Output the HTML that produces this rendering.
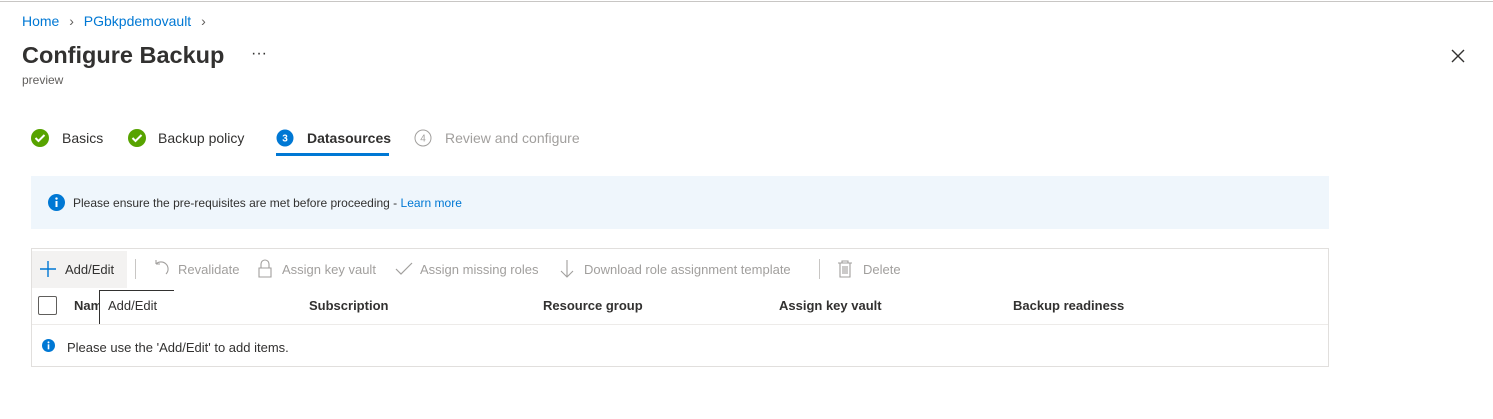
<!DOCTYPE html>
<html><head><meta charset="utf-8"><style>
*{margin:0;padding:0;box-sizing:border-box}
body{width:1493px;height:419px;background:#fff;font-family:"Liberation Sans",sans-serif;color:#323130;position:relative;overflow:hidden}
.a{position:absolute;white-space:nowrap}
.g{color:#a19f9d}
</style></head><body>
<div class="a" style="left:0;top:1px;width:1493px;height:1px;background:#c8c6c4"></div>
<div class="a" style="left:22px;top:13px;font-size:14px;color:#0078d4">Home <span style="color:#605e5c;margin:0 6px">&#x203A;</span> PGbkpdemovault <span style="color:#605e5c;margin-left:6px">&#x203A;</span></div>
<div class="a" style="left:22px;top:42px;font-size:23.5px;font-weight:600;color:#323130">Configure Backup</div>
<div class="a" style="left:251px;top:45px;font-size:16px">&middot;&middot;&middot;</div>
<div class="a" style="left:22px;top:73px;font-size:12px;color:#605e5c">preview</div>
<svg class="a" style="left:1450px;top:48px" width="16" height="16"><path d="M2 2L14 14M14 2L2 14" stroke="#323130" stroke-width="1.4"/></svg>

<svg class="a" style="left:30px;top:128px" width="20" height="20"><circle cx="10" cy="10" r="9" fill="#57a300"/><path d="M5.5 10l3 3 6-6" stroke="#fff" stroke-width="2" fill="none"/></svg>
<div class="a" style="left:62px;top:130px;font-size:14px">Basics</div>
<svg class="a" style="left:127px;top:128px" width="20" height="20"><circle cx="10" cy="10" r="9" fill="#57a300"/><path d="M5.5 10l3 3 6-6" stroke="#fff" stroke-width="2" fill="none"/></svg>
<div class="a" style="left:158px;top:130px;font-size:14px">Backup policy</div>
<svg class="a" style="left:276px;top:129px" width="18" height="18"><circle cx="9" cy="9" r="8.5" fill="#0078d4"/><text x="9" y="12.5" font-size="10" font-weight="bold" fill="#fff" text-anchor="middle" font-family="Liberation Sans">3</text></svg>
<div class="a" style="left:307px;top:130px;font-size:14px;font-weight:600">Datasources</div>
<div class="a" style="left:276px;top:153px;width:113px;height:3px;background:#0078d4"></div>
<svg class="a" style="left:414px;top:129px" width="18" height="18"><circle cx="9" cy="9" r="8" fill="none" stroke="#a19f9d"/><text x="9" y="12.5" font-size="10" fill="#a19f9d" text-anchor="middle" font-family="Liberation Sans">4</text></svg>
<div class="a g" style="left:445px;top:130px;font-size:14px">Review and configure</div>

<div class="a" style="left:31px;top:176px;width:1298px;height:53px;background:#eff6fc"></div>
<svg class="a" style="left:48px;top:194px" width="17" height="17"><circle cx="8.5" cy="8.5" r="8.5" fill="#0078d4"/><rect x="7.5" y="7" width="2" height="6" fill="#fff"/><circle cx="8.5" cy="4.6" r="1.2" fill="#fff"/></svg>
<div class="a" style="left:73px;top:196px;font-size:12px">Please ensure the pre-requisites are met before proceeding - <span style="color:#0078d4">Learn more</span></div>

<div class="a" style="left:31px;top:248px;width:1298px;height:119px;border:1px solid #e1dfdd"></div>
<div class="a" style="left:32px;top:251px;width:95px;height:37px;background:#f3f2f1"></div>
<svg class="a" style="left:39px;top:260px" width="18" height="18"><path d="M9 1v16M1 9h16" stroke="#0078d4" stroke-width="1.4"/></svg>
<div class="a" style="left:65px;top:262px;font-size:13px">Add/Edit</div>
<div class="a" style="left:135px;top:259px;width:1px;height:20px;background:#c8c6c4"></div>
<svg class="a" style="left:152px;top:259px" width="18" height="20"><path d="M14 15A7 7 0 1 0 4 5M4 5l0-4M4 5l4 0" stroke="#a19f9d" stroke-width="1.1" fill="none"/></svg>
<div class="a g" style="left:178px;top:262px;font-size:13px">Revalidate</div>
<svg class="a" style="left:257px;top:259px" width="16" height="20"><path d="M4 9V5a4 4 0 0 1 8 0v4M2 9h12v9H2z" stroke="#a19f9d" stroke-width="1.1" fill="none"/></svg>
<div class="a g" style="left:282px;top:262px;font-size:13px">Assign key vault</div>
<svg class="a" style="left:395px;top:261px" width="18" height="16"><path d="M1 8l5 5L17 2" stroke="#a19f9d" stroke-width="1.2" fill="none"/></svg>
<div class="a g" style="left:420px;top:262px;font-size:13px">Assign missing roles</div>
<svg class="a" style="left:560px;top:259px" width="14" height="20"><path d="M7 1v17M1 12l6 6 6-6" stroke="#a19f9d" stroke-width="1.1" fill="none"/></svg>
<div class="a g" style="left:584px;top:262px;font-size:13px">Download role assignment template</div>
<div class="a" style="left:819px;top:259px;width:1px;height:20px;background:#c8c6c4"></div>
<svg class="a" style="left:837px;top:259px" width="16" height="20"><path d="M1 4h14M5 4V2h6v2M3 4v14h10V4M6 7v8M8 7v8M10 7v8" stroke="#a19f9d" stroke-width="1.1" fill="none"/></svg>
<div class="a g" style="left:863px;top:262px;font-size:13px">Delete</div>

<div class="a" style="left:38px;top:296px;width:19px;height:19px;border:1px solid #605e5c;border-radius:2px"></div>
<div class="a" style="left:74px;top:298px;font-size:13px;font-weight:600">Nam</div>
<div class="a" style="left:99px;top:290px;width:75px;height:35px;background:#fff;border-left:1px solid #323130;border-top:1px solid #323130"></div>
<div class="a" style="left:108px;top:298px;font-size:13px">Add/Edit</div>
<div class="a" style="left:309px;top:298px;font-size:13px;font-weight:600">Subscription</div>
<div class="a" style="left:543px;top:298px;font-size:13px;font-weight:600">Resource group</div>
<div class="a" style="left:779px;top:298px;font-size:13px;font-weight:600">Assign key vault</div>
<div class="a" style="left:1013px;top:298px;font-size:13px;font-weight:600">Backup readiness</div>
<div class="a" style="left:32px;top:324px;width:1296px;height:1px;background:#edebe9"></div>
<svg class="a" style="left:42px;top:339px" width="13" height="13"><circle cx="6.5" cy="6.5" r="6.5" fill="#0078d4"/><rect x="5.7" y="5.3" width="1.6" height="5" fill="#fff"/><circle cx="6.5" cy="3.4" r="1" fill="#fff"/></svg>
<div class="a" style="left:67px;top:340px;font-size:13px">Please use the 'Add/Edit' to add items.</div>
</body></html>
